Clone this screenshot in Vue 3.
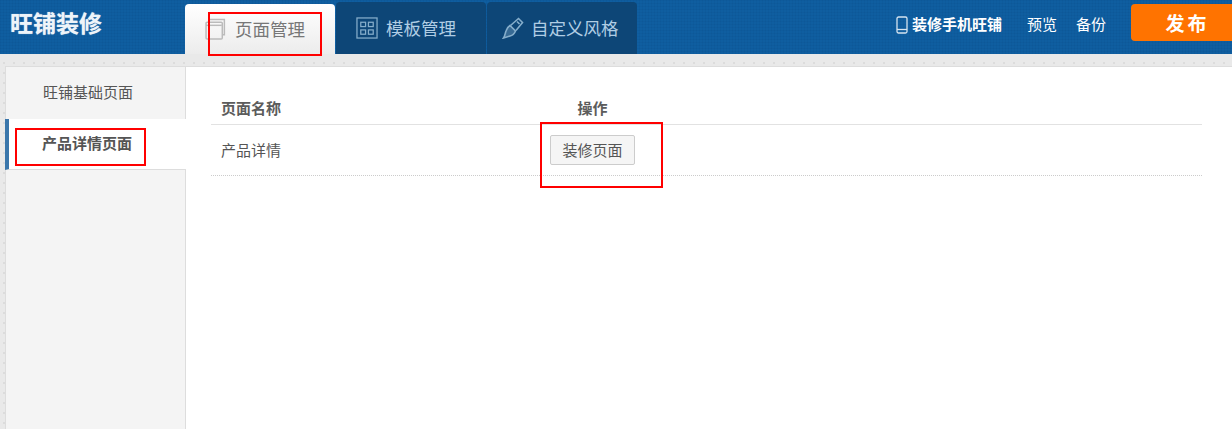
<script setup>
const annotations = [
  { left: '208px', top: '12px', width: '114px', height: '44px' },
  { left: '15px', top: '128px', width: '131px', height: '38px' },
  { left: '540px', top: '122px', width: '123px', height: '66px' }
]
</script>

<template>
  <div class="page">
    <header class="top">
      <div class="logo">旺铺装修</div>
      <nav class="tabs">
        <div class="tab active">
          <svg class="ico" viewBox="0 0 21 21" fill="none" stroke="#bbb" stroke-width="1.4"><path d="M4 3V1.500h14.500V16H17"/><rect x="1" y="4" width="15.500" height="16" rx="1"/><path d="M1 7h15"/></svg>
          <span>页面管理</span>
        </div>
        <div class="tab">
          <svg class="ico" viewBox="0 0 23 23" fill="none" stroke="#86aecb" stroke-width="1.3"><rect x="1" y="1" width="21" height="21"/><rect x="5" y="5.500" width="5" height="4.500"/><rect x="13" y="5.500" width="5" height="4.500"/><rect x="5" y="13.500" width="5" height="4.500"/><rect x="13" y="13.500" width="5" height="4.500"/></svg>
          <span>模板管理</span>
        </div>
        <div class="tab third">
          <svg class="ico" viewBox="0 0 22 22" fill="none" stroke="#86aecb" stroke-width="1.600"><path d="M8.500 8.500L16.500 1.500l4 4L14 13.500"/><path d="M8 8.500l5.500 5.500c-1 2.500-3 4.500-5.500 5L1.500 21c1.500-2 1.500-4.500 2.500-7 .7-2 2.200-4.500 4-5.500z" fill="#86aecb" fill-opacity="0.35"/><path d="M15 4.500l2.500 2.500"/></svg>
          <span>自定义风格</span>
        </div>
      </nav>
      <div class="actions">
        <span class="mobile">
          <svg class="phone" viewBox="0 0 12 18" fill="none" stroke="#d5e4f0" stroke-width="1.300"><rect x="1" y="1" width="10" height="16" rx="1.500"/><path d="M1 13.500h10"/></svg>
          装修手机旺铺
        </span>
        <span class="link">预览</span>
        <span class="link">备份</span>
        <button class="publish">发布</button>
      </div>
    </header>

    <div class="strip"></div>

    <div class="panel">
      <aside class="side">
        <div class="side-item">旺铺基础页面</div>
        <div class="side-item current">产品详情页面</div>
      </aside>
      <main class="main">
        <div class="row head">
          <div class="col-name">页面名称</div>
          <div class="col-op">操作</div>
        </div>
        <div class="row body">
          <div class="col-name body-name">产品详情</div>
          <div class="col-op"><button class="btn">装修页面</button></div>
        </div>
      </main>
    </div>

    <div v-for="(a, i) in annotations" :key="i" class="mark" :style="a"></div>
  </div>
</template>

<style>
html, body { margin: 0; padding: 0; background: #fff; }
</style>

<style scoped>
.page {
  position: relative;
  width: 1232px;
  height: 429px;
  overflow: hidden;
  background-color: #e9e9e9;
  background-image: radial-gradient(circle at 4px 3px, #dcdcdc 0.8px, transparent 1.2px);
  background-size: 10px 10px;
  font-family: "Liberation Sans", "Noto Sans CJK SC", sans-serif;
  color: #555;
}
.top {
  height: 54px;
  background-color: #0f5ea0;
  background-image:
    linear-gradient(rgba(0, 40, 90, 0.05) 1px, transparent 1px),
    linear-gradient(90deg, rgba(0, 40, 90, 0.05) 1px, transparent 1px);
  background-size: 3px 3px;
  display: flex;
  align-items: flex-start;
}
.logo {
  width: 185px;
  padding: 9px 0 0 10px;
  box-sizing: border-box;
  font-size: 23px;
  line-height: 30px;
  font-weight: 700;
  color: #eef4f9;
  text-shadow: 0 0 1px rgba(255, 255, 255, 0.7);
}
.tabs { display: flex; gap: 1px; padding-top: 2px; }
.tab {
  width: 150px;
  height: 52px;
  box-sizing: border-box;
  padding: 0 0 1px 20px;
  display: flex;
  align-items: center;
  gap: 8px;
  background: #0d4677;
  border-radius: 4px 4px 0 0;
  color: #b0cde4;
  font-size: 17.500px;
}
.tab.third { padding-left: 15px; gap: 7px; }
.tab.active {
  margin-top: 2px;
  height: 50px;
  background: linear-gradient(#fff, #ececec);
  color: #777;
  padding-left: 20px;
  gap: 8px;
}
.ico { width: 22px; height: 22px; flex: none; }
.actions {
  margin-left: auto;
  display: flex;
  align-items: flex-start;
  color: #fff;
  font-size: 15px;
  line-height: 20px;
}
.mobile {
  display: flex;
  align-items: center;
  gap: 4px;
  font-weight: 700;
  font-size: 15px;
  padding-top: 15px;
  margin-right: 25px;
}
.phone { width: 12px; height: 18px; }
.link { padding-top: 15px; margin-right: 19px; }
.link + .link { margin-right: 25px; }
.publish {
  width: 101px;
  height: 37px;
  margin-top: 4px;
  border: 0;
  padding: 0 0 0 12px;
  border-radius: 4px 0 0 4px;
  background: #ff7300;
  color: #fff;
  letter-spacing: 3px;
  font: 700 19px "Liberation Sans", "Noto Sans CJK SC", sans-serif;
}
.strip { height: 12px; }
.panel {
  margin-left: 5px;
  height: 363px;
  display: flex;
  background: #fff;
  border-top: 1px solid #ddd;
}
.side {
  width: 181px;
  flex: none;
  background: #f4f4f4;
  border-right: 1px solid #ddd;
  box-sizing: border-box;
  border-left: 1px solid #ddd;
}
.side-item {
  height: 52px;
  font-size: 15px;
  line-height: 51px;
  padding-left: 37px;
  color: #555;
}
.side-item.current {
  box-sizing: border-box;
  margin: 0 -1px;
  height: 51px;
  padding-left: 33px;
  background: #fff;
  border-left: 4px solid #3a76ab;
  border-bottom: 1px solid #ddd;
  font-weight: 700;
  line-height: 50px;
}
.main {
  flex: 1;
  padding: 23px 30px 0 25px;
  font-size: 15px;
}
.row { display: flex; align-items: center; }
.head {
  height: 35px;
  font-weight: 700;
  color: #5c5c5c;
  border-bottom: 1px solid #e2e2e2;
  box-sizing: border-box;
}
.body { height: 51px; border-bottom: 1px dotted #ccc; box-sizing: border-box; }
.body-name { padding-bottom: 2px; }
.col-name { width: 339px; padding-left: 10px; box-sizing: border-box; }
.col-op { width: 85px; text-align: center; }
.btn {
  width: 85px;
  height: 30px;
  padding: 0 0 2px;
  background: #f5f5f5;
  border: 1px solid #ccc;
  border-radius: 2px;
  color: #555;
  display: block;
  font: 15px "Liberation Sans", "Noto Sans CJK SC", sans-serif;
}
.mark {
  position: absolute;
  border: 2px solid #f00;
  box-sizing: border-box;
  pointer-events: none;
}
</style>
